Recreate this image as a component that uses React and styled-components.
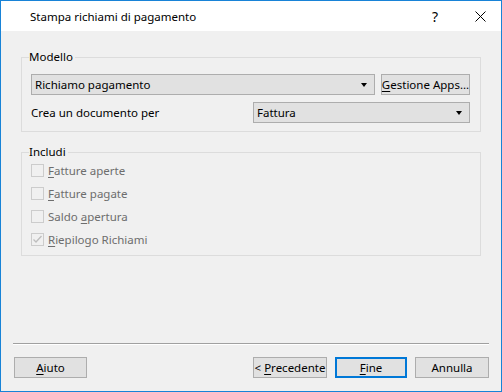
import styled, { createGlobalStyle } from "styled-components";

const GlobalStyle = createGlobalStyle`
  html, body {
    margin: 0;
    padding: 0;
    background: #fff;
  }
  body {
    font-family: "Noto Sans", "Liberation Sans", sans-serif;
    font-size: 11.5px;
    color: #000;
  }
`;

const Window = styled.div`
  width: 502px;
  height: 392px;
  box-sizing: border-box;
  border: 1px solid #1883d7;
  display: flex;
  flex-direction: column;
  background: #f0f0f0;
`;

const TitleBar = styled.div`
  height: 30px;
  background: #fff;
  display: flex;
  align-items: center;
  padding-left: 29px;
  padding-right: 8px;
`;

const Title = styled.div`
  flex: 1;
  font-size: 11.5px;
`;

const TitleButton = styled.div`
  width: ${(p) => p.w}px;
  margin-left: ${(p) => p.ml || 0}px;
  display: flex;
  align-items: center;
  justify-content: center;
  font-size: 14px;
`;

const Body = styled.div`
  flex: 1;
  display: flex;
  flex-direction: column;
  padding: 19px 20px 0 20px;
`;

const Group = styled.fieldset`
  margin: ${(p) => p.top || 0}px 0 0 0;
  padding: ${(p) => p.pt}px 10px ${(p) => p.pb}px 9px;
  border: 1px solid #dcdcdc;
  min-width: 0;
`;

const Legend = styled.legend`
  padding: 0 2px 0 0;
  margin-left: -2px;
  line-height: 14px;
`;

const Row = styled.div`
  display: flex;
  align-items: center;
  height: ${(p) => p.h}px;
  margin-top: ${(p) => p.mt || 0}px;
  gap: 6px;
  white-space: nowrap;
`;

const Select = styled.div`
  box-sizing: border-box;
  height: 21px;
  width: ${(p) => p.w}px;
  margin-left: ${(p) => (p.push ? "auto" : "0")};
  background: #e1e1e1;
  border: 1px solid #adadad;
  display: flex;
  align-items: center;
  padding: 0 7px 0 3px;
`;

const SelectText = styled.span`
  flex: 1;
`;

const Arrow = styled.span`
  width: 0;
  height: 0;
  border-left: 3.5px solid transparent;
  border-right: 3.5px solid transparent;
  border-top: 4px solid #000;
`;

const Button = styled.button`
  box-sizing: border-box;
  height: 21px;
  width: ${(p) => p.w}px;
  flex: none;
  background: #e1e1e1;
  border: ${(p) => (p.primary ? "2px solid #0078d7" : "1px solid #adadad")};
  font-family: inherit;
  font-size: 11.5px;
  color: #000;
  padding: 0;
  white-space: nowrap;
  display: flex;
  align-items: center;
  justify-content: center;
`;

const Key = styled.span`
  text-decoration: underline;
  text-underline-offset: 2px;
`;

const Label = styled.span`
  color: ${(p) => (p.disabled ? "#6d6d6d" : "#000")};
`;

const CheckRow = styled.div`
  display: flex;
  align-items: center;
  height: 23px;
  gap: 4px;
`;

const Box = styled.span`
  box-sizing: border-box;
  width: 13px;
  height: 13px;
  border: 1px solid #cccccc;
  background: #f0f0f0;
  display: flex;
  align-items: center;
  justify-content: center;
`;

const Spacer = styled.div`
  flex: 1;
`;

const Separator = styled.div`
  margin: 0 -8px;
  border-top: 1px solid #a0a0a0;
  border-bottom: 1px solid #fff;
`;

const Footer = styled.div`
  display: flex;
  align-items: center;
  padding: 12px 0 13px 0;
  margin: 0 -8px;
  gap: 8px;
`;

const Check = ({ checked, children }) => (
  <CheckRow>
    <Box>
      {checked && (
        <svg width="11" height="11" viewBox="0 0 11 11">
          <polyline points="1.5,5.5 4,8 9.5,2" fill="none" stroke="#bdbdbd" strokeWidth="1.3" />
        </svg>
      )}
    </Box>
    <Label disabled>{children}</Label>
  </CheckRow>
);

const App = () => (
  <>
    <GlobalStyle />
    <Window>
      <TitleBar>
        <Title>Stampa richiami di pagamento</Title>
        <TitleButton w={20}>?</TitleButton>
        <TitleButton w={26} ml={22}>
          <svg width="11" height="11" viewBox="0 0 11 11">
            <path d="M0.5 0.5 L10.5 10.5 M10.5 0.5 L0.5 10.5" stroke="#000" strokeWidth="1" />
          </svg>
        </TitleButton>
      </TitleBar>
      <Body>
        <Group pt={10} pb={8}>
          <Legend>Modello</Legend>
          <Row h={21}>
            <Select w={346}>
              <SelectText>Richiamo pagamento</SelectText>
              <Arrow />
            </Select>
            <Button w={89}>
              <span>
                <Key>G</Key>estione Apps...
              </span>
            </Button>
          </Row>
          <Row h={21} mt={7}>
            <span>Crea un documento per</span>
            <Select w={217} push>
              <SelectText>Fattura</SelectText>
              <Arrow />
            </Select>
          </Row>
        </Group>
        <Group top={13} pt={0} pb={4}>
          <Legend>Includi</Legend>
          <Check>
            <Key>F</Key>atture aperte
          </Check>
          <Check>
            <Key>F</Key>atture pagate
          </Check>
          <Check>
            Saldo <Key>a</Key>pertura
          </Check>
          <Check checked>
            <Key>R</Key>iepilogo Richiami
          </Check>
        </Group>
        <Spacer />
        <Separator />
        <Footer>
          <Button w={73} style={{ marginLeft: 1 }}>
            <span>
              <Key>A</Key>iuto
            </span>
          </Button>
          <Spacer />
          <Button w={74}>
            <span>
              &lt; <Key>P</Key>recedente
            </span>
          </Button>
          <Button w={72} primary>
            <span>
              <Key>F</Key>ine
            </span>
          </Button>
          <Button w={74}>Annulla</Button>
        </Footer>
      </Body>
    </Window>
  </>
);

export default App;
